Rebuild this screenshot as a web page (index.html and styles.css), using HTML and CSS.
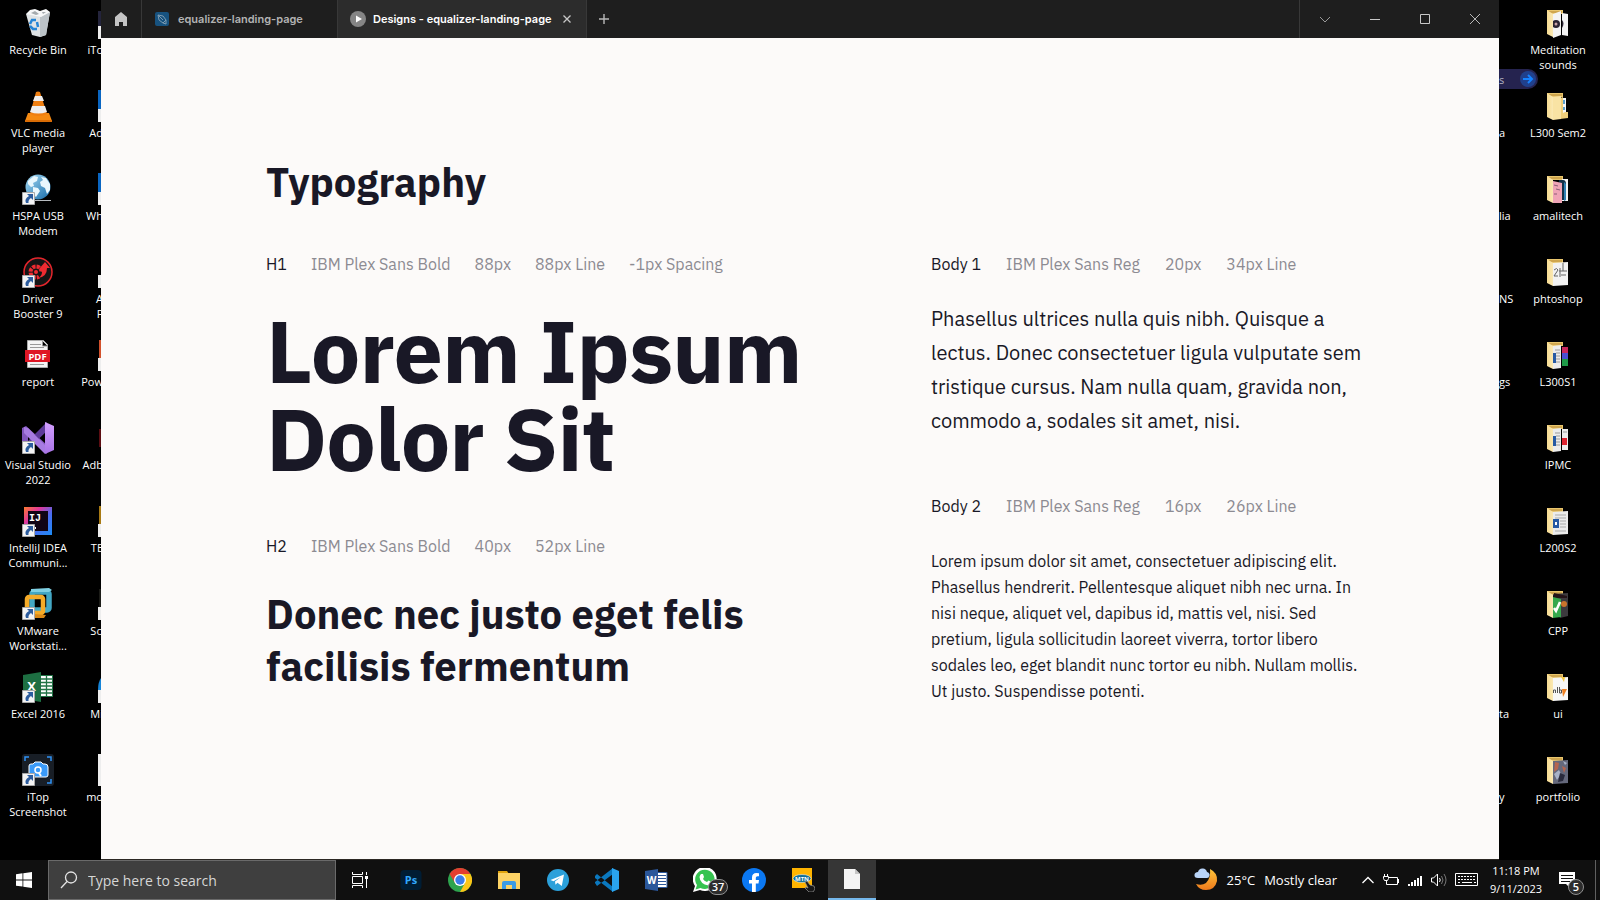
FILE: index.html
```html
<!DOCTYPE html>
<html lang="en">
<head>
<meta charset="utf-8">
<title>Designs - equalizer-landing-page</title>
<link rel="stylesheet" href="styles.css">
</head>
<body>
<svg class="defs" aria-hidden="true">
  <defs>
    <linearGradient id="fold" x1="0" x2="1"><stop offset="0" stop-color="#f7dc92"/><stop offset="1" stop-color="#fbe9b4"/></linearGradient>
    <linearGradient id="globe" x1="0" y1="0" x2="1" y2="1"><stop offset="0" stop-color="#a8dcf5"/><stop offset="1" stop-color="#146aa8"/></linearGradient>
    <linearGradient id="ij" x1="0" y1="0" x2="1" y2="1"><stop offset="0" stop-color="#ff7a2d"/><stop offset=".3" stop-color="#e0379b"/><stop offset=".6" stop-color="#4a6cf0"/><stop offset="1" stop-color="#1c8cf5"/></linearGradient>
    <linearGradient id="moon" x1="0" y1="0" x2="0" y2="1"><stop offset="0" stop-color="#ffc53a"/><stop offset="1" stop-color="#ee7a1c"/></linearGradient>
    <linearGradient id="vs" x1="0" y1="0" x2="0" y2="1"><stop offset="0" stop-color="#d3a0ff"/><stop offset="1" stop-color="#a873e6"/></linearGradient>
    <symbol id="link" viewBox="0 0 13 13"><path fill="#f4f4f4" stroke="#a8a8a8" d="M.5.5h12v12H.5z"/><path fill="#2c5c9e" d="M5 2h6v6L9 6Q6 8 6.500 11H4Q2 7 7 4Z"/></symbol>
    <symbol id="folder" viewBox="0 0 32 32"><path fill="#e9c66e" d="M5 3h16v4H5z"/><path fill="#cfa64e" d="M6 4h14v2H6z"/></symbol>
    <symbol id="flap" viewBox="0 0 32 32"><path fill="url(#fold)" d="M5 3l6 4v23l-6-3z"/></symbol>
  </defs>
</svg>
<div class="desktop">
  <ul class="icons">
    <li><svg viewBox="0 0 32 32"><path fill="#dfe3e5" d="M4 7l24-2-4 23-6 2-8-2z"/><path fill="#bcc3c8" d="M18 10l10-5-4 23-6 2z"/><path fill="#f6f7f8" d="M4 7l4-4 5-1 5 2 6-2 4 3-9 5z"/><path fill="#a4aaae" d="M9 6l4-2 4 3-3 1zM20 5l4 0-3 2z"/><path fill="none" stroke="#2585d6" stroke-width="2.500" d="M8 17l2-4h4M15 15l1 5M8 19l3 3h4"/></svg><span>Recycle Bin</span></li>
    <li><svg viewBox="0 0 32 32"><path fill="#f58a12" d="M6 23h21l3 8H3z"/><path fill="#d96c05" d="M3 30h27v2H3z"/><path fill="#ef7f12" d="M14 2q2-1 4 0l7 22q-9 4-17 0z"/><path fill="#eee" d="M13 6h7l2 5H11zM10 16h13l2 6q-9 3-17 0z"/></svg><span>VLC media<br>player</span></li>
    <li><svg viewBox="0 0 32 32"><path fill="#b8bcc0" d="M12 27h17v1H12z"/><circle cx="16" cy="14" r="12.500" fill="url(#globe)"/><path fill="#e9f7fd" d="M6 8l6-5 4 1-1 4-4 2 1 3-3 1-3-3zM11 14l5 1 2 3-4 6-3-3zM19 4l5 1 4 6 0 6-3 4-2-6-4-2-1-4 3-2z"/><use href="#link" x="0" y="19" width="13" height="13"/></svg><span>HSPA USB<br>Modem</span></li>
    <li><svg viewBox="0 0 32 32"><circle cx="16" cy="16" r="14" fill="#151515" stroke="#e3262c" stroke-width="1.500"/><circle cx="14" cy="16" r="5.500" fill="none" stroke="#ee2b31" stroke-width="4" stroke-dasharray="3.300 1"/><path fill="#151515" d="M14 16l12-1-5 12z"/><path fill="#ee2b31" d="M20 16l-3-3 6-7 5 6h-3q0 9-9 10 4-2 4-6z"/><circle cx="14" cy="16" r="2" fill="#ee2b31"/><use href="#link" y="19" width="13" height="13"/></svg><span>Driver<br>Booster 9</span></li>
    <li><svg viewBox="0 0 32 32"><path fill="#f4f4f4" stroke="#aaa" d="M5.500 1.500h16l4 4v23h-20z"/><path stroke="#999" d="M8 5.500h11M8 8.500h14M8 25.500h14M20.500 2v5h5"/><path fill="#df1624" d="M3 11h25v12H3z"/><text x="15.500" y="21" text-anchor="middle" class="glyph" font-size="9.500">PDF</text></svg><span>report</span></li>
    <li><svg viewBox="0 0 32 32"><path fill="#8256bd" d="M0 6l4-2 21 19v9L6 13v14l-6-2z"/><path fill="#5d3a99" d="M25 0v9L6 27l-4-2 0-2z"/><path fill="url(#vs)" d="M23 0l9 4v24l-9 4z"/><path fill="#a77be2" d="M2 5l4 1 17 17v9L2 11z"/><use href="#link" y="19" width="13" height="13"/></svg><span>Visual Studio<br>2022</span></li>
    <li><svg viewBox="0 0 32 32"><path fill="url(#ij)" d="M2 2h28v28H2z"/><path fill="#100414" d="M6 6h20v20H6z"/><text x="7" y="16" class="glyph glyph-mono" font-size="10">IJ</text><path fill="#fff" d="M8 22h6v2H8z"/><use href="#link" y="19" width="13" height="13"/></svg><span>IntelliJ IDEA<br>Communi...</span></li>
    <li><svg viewBox="0 0 32 32"><rect x="10" y="4" width="17" height="18" rx="2" fill="none" stroke="#43a7c4" stroke-width="5.500"/><path fill="#7fd0e3" d="M9 1l18-1 3 2-3 2H9z"/><rect x="5" y="9" width="16" height="16" rx="2" fill="none" stroke="#f5ab28" stroke-width="4.500"/><path fill="#da8815" d="M12 26l12 1-2 3H12z"/><use href="#link" y="19" width="13" height="13"/></svg><span>VMware<br>Workstati...</span></li>
    <li><svg viewBox="0 0 32 32"><path fill="#fff" stroke="#217346" d="M17 4.500h13.500v21H17z"/><path stroke="#217346" stroke-width="1.300" d="M18 8h12M18 11.500h12M18 15h12M18 18.500h12M18 22h12M24.500 5v20"/><path fill="#1d6f42" d="M1 4l18-3v30L1 28z"/><text x="9.500" y="20" text-anchor="middle" class="glyph" font-size="13">X</text><use href="#link" y="19" width="13" height="13"/></svg><span>Excel 2016</span></li>
    <li><svg viewBox="0 0 32 32"><rect width="32" height="32" rx="3" fill="#181e26"/><path fill="none" stroke="#2f93f5" stroke-width="1.500" d="M3 7V3h4M25 3h4v4M29 25v4h-4"/><path fill="#3a9af8" stroke="#fff" d="M7 12q0-2 2-2h2l2-2h6l2 2h2q3 0 3 3v8q0 2-2 2H9q-2 0-2-2z"/><circle cx="16" cy="16" r="3" fill="#3a9af8" stroke="#fff" stroke-width="1.500"/><path stroke="#fff" stroke-width="2" d="M17 19l2 3"/><use href="#link" y="19" width="13" height="13"/></svg><span>iTop<br>Screenshot</span></li>
  </ul>
  <ul class="icons icons-cut-left">
    <li><svg viewBox="0 0 3 32"><path fill="#24243c" d="M0 4h3v15H0z"/><path fill="#eee" d="M0 19h3v13H0z"/></svg><span>iTo</span></li>
    <li><svg viewBox="0 0 3 32"><path fill="#0a66c2" d="M0 0h3v19H0z"/><path fill="#eee" d="M0 19h3v13H0z"/></svg><span>Ad</span></li>
    <li><svg viewBox="0 0 3 32"><path fill="#0a66c2" d="M0 0h3v19H0z"/><path fill="#eee" d="M0 19h3v13H0z"/></svg><span>Wh</span></li>
    <li><svg viewBox="0 0 3 32"><path fill="#eee" d="M0 19h3v13H0z"/></svg><span>A<br>F</span></li>
    <li><svg viewBox="0 0 3 32"><path fill="#d2512c" d="M1 1h2v18H1z"/><path fill="#eee" d="M0 19h3v13H0z"/></svg><span>Pow</span></li>
    <li><svg viewBox="0 0 3 32"><path fill="#5c0d12" d="M1 7h2v18H1z"/></svg><span>Adb</span></li>
    <li><svg viewBox="0 0 3 32"><path fill="#a87a14" d="M1 1h2v18H1z"/><path fill="#eee" d="M0 19h3v13H0z"/></svg><span>TE</span></li>
    <li><svg viewBox="0 0 3 32"><path fill="#1c1c18" d="M1 1h2v18H1z"/><path fill="#eee" d="M0 19h3v13H0z"/></svg><span>So</span></li>
    <li><svg viewBox="0 0 3 32"><path fill="#1785d8" d="M3 7v12H0q0-8 3-12z"/><path fill="#eee" d="M0 19h3v13H0z"/></svg><span>Mi</span></li>
    <li><svg viewBox="0 0 3 32"><path fill="#eee" d="M0 0h3v32H0z"/></svg><span>mo</span></li>
  </ul>

  <div class="window">
    <header class="titlebar">
      <button class="home" aria-label="Home"><svg width="14" height="16" viewBox="0 0 14 16"><path fill="#c4c4c4" d="M7 1l6 5v9H9v-4H5v4H1V6z"/></svg></button>
      <div class="tab">
        <svg width="14" height="14" viewBox="0 0 14 14"><rect width="14" height="14" rx="2" fill="#17527f"/><path fill="none" stroke="#7c9ab0" d="M3 3l5 1 3 4-3 3-4-3zM3 3l5 5M8 11l3 1 0-4"/></svg>
        <span>equalizer-landing-page</span>
      </div>
      <div class="tab tab-active">
        <svg width="16" height="16" viewBox="0 0 16 16"><circle cx="8" cy="8" r="8" fill="#858585"/><path fill="#fff" d="M6 4.500l6 3.500-6 3.500z"/></svg>
        <span>Designs - equalizer-landing-page</span>
        <button aria-label="Close tab"><svg width="10" height="10" viewBox="0 0 10 10"><path stroke="#c8c8c8" stroke-width="1.300" d="M1.500 1.500l7 7M8.500 1.500l-7 7"/></svg></button>
      </div>
      <button class="new-tab" aria-label="New tab"><svg width="12" height="12" viewBox="0 0 12 12"><path stroke="#b8b8b8" stroke-width="1.400" d="M6 1v10M1 6h10"/></svg></button>
      <div class="controls">
        <button aria-label="Tabs"><svg width="12" height="12" viewBox="0 0 12 12"><path fill="none" stroke="#999" d="M1 4l5 5 5-5"/></svg></button>
        <button aria-label="Minimize"><svg width="12" height="12" viewBox="0 0 12 12"><path stroke="#c8c8c8" d="M1 6.500h10"/></svg></button>
        <button aria-label="Maximize"><svg width="12" height="12" viewBox="0 0 12 12"><path fill="none" stroke="#c8c8c8" d="M1.500 1.500h9v9h-9z"/></svg></button>
        <button aria-label="Close"><svg width="12" height="12" viewBox="0 0 12 12"><path stroke="#b8b8b8" d="M1 1l10 10M11 1L1 11"/></svg></button>
      </div>
    </header>
    <main class="page">
      <h2 class="title">Typography</h2>
      <div class="columns">
        <div class="headings">
          <p class="meta"><b>H1</b><span>IBM Plex Sans Bold</span><span>88px</span><span>88px Line</span><span>-1px Spacing</span></p>
          <h1 class="h1">Lorem Ipsum<br>Dolor Sit</h1>
          <p class="meta"><b>H2</b><span>IBM Plex Sans Bold</span><span>40px</span><span>52px Line</span></p>
          <h2 class="h2">Donec nec justo eget felis<br>facilisis fermentum</h2>
        </div>
        <div>
          <p class="meta"><b>Body 1</b><span>IBM Plex Sans Reg</span><span>20px</span><span>34px Line</span></p>
          <p class="body1">Phasellus ultrices nulla quis nibh. Quisque a<br>lectus. Donec consectetuer ligula vulputate sem<br>tristique cursus. Nam nulla quam, gravida non,<br>commodo a, sodales sit amet, nisi.</p>
          <p class="meta"><b>Body 2</b><span>IBM Plex Sans Reg</span><span>16px</span><span>26px Line</span></p>
          <p class="body2">Lorem ipsum dolor sit amet, consectetuer adipiscing elit.<br>Phasellus hendrerit. Pellentesque aliquet nibh nec urna. In<br>nisi neque, aliquet vel, dapibus id, mattis vel, nisi. Sed<br>pretium, ligula sollicitudin laoreet viverra, tortor libero<br>sodales leo, eget blandit nunc tortor eu nibh. Nullam mollis.<br>Ut justo. Suspendisse potenti.</p>
        </div>
      </div>
    </main>
  </div>

  <ul class="icons icons-cut-right">
    <li></li>
    <li><span>a</span></li>
    <li><span>lia</span></li>
    <li><span>NS</span></li>
    <li><span>gs</span></li>
    <li></li>
    <li></li>
    <li></li>
    <li><span>ta</span></li>
    <li><span>y</span></li>
  </ul>
  <ul class="icons icons-last">
    <li><svg viewBox="0 0 32 32"><use href="#folder"/><path fill="#f4f4f4" d="M11 7l8-3v24l-8 3zM20 6l6 1v22l-6-1z"/><circle cx="14" cy="17" r="4" fill="#2b2433"/><circle cx="14" cy="17" r="1.500" fill="#c9a3a8"/><path fill="#2b2433" d="M20 13q3 3 0 8z"/><use href="#flap"/></svg><span>Meditation<br>sounds</span></li>
    <li><svg viewBox="0 0 32 32"><use href="#folder"/><path fill="#f3f7fa" d="M18 8h6v16h-6z"/><path fill="#5a9fd0" d="M20 10h3v4h-3zM20 17h3v3h-3z"/><path fill="#efcf7b" d="M23 22h3v6l-8 1V8l3-1v16z"/><path fill="#f9e3a4" d="M11 7l8-1v23l-8 1z"/><use href="#flap"/></svg><span>L300 Sem2</span></li>
    <li><svg viewBox="0 0 32 32"><use href="#folder"/><path fill="#f4f4f4" d="M20 6h6v22h-6z"/><path fill="#123048" d="M17 7h4q3 0 3 4v16h-7z"/><path fill="#2f81b5" d="M22 9l2 2v16l-2 1z"/><path fill="#efa4b6" d="M11 8l9 2v20l-9 0z"/><path stroke="#8b5c76" d="M12 12l4 1M14 16l4 1M12 21h3"/><use href="#flap"/></svg><span>amalitech</span></li>
    <li><svg viewBox="0 0 32 32"><use href="#folder"/><path fill="#f2f2f2" d="M11 7l15-1v23l-15 1z"/><path fill="none" stroke="#666" d="M12 14q3-3 4 0l-4 6h4M18 12v9M17 15h8M19 19h5M21 7v8"/><use href="#flap"/></svg><span>phtoshop</span></li>
    <li><svg viewBox="0 0 32 32"><use href="#folder"/><path fill="#ececec" d="M11 7l8-1v23l-8 1z"/><path fill="#c8285d" d="M20 8h6v6h-6z"/><path fill="#4a4fd2" d="M20 14h6v6h-6z"/><path fill="#1e9a48" d="M20 20h6v7h-6z"/><path stroke="#999" d="M13 11h5M14 14h4M14 17h4M14 20h4M14 23h4"/><path fill="#275aa4" d="M11 14h3v10h-3z"/><use href="#flap"/></svg><span>L300S1</span></li>
    <li><svg viewBox="0 0 32 32"><use href="#folder"/><path fill="#ececec" d="M11 7l8-1v23l-8 1zM20 7h6v21h-6z"/><path stroke="#999" d="M13 11h5M14 14h4M14 17h4M14 20h4M14 23h4M21 10h4"/><path fill="#275aa4" d="M11 14h3v10h-3z"/><path fill="#dc2430" d="M20 16h5v7h-5z"/><use href="#flap"/></svg><span>IPMC</span></li>
    <li><svg viewBox="0 0 32 32"><use href="#folder"/><path fill="#ececec" d="M11 7l15-1v23l-15 1z"/><path stroke="#aaa" d="M13 10h11M13 13h11M18 16h6M18 19h6M18 22h6M13 26h11"/><path fill="#275aa4" d="M11 14h6v9h-6z"/><path fill="#fff" d="M13 17h2v3h-2z"/><use href="#flap"/></svg><span>L200S2</span></li>
    <li><svg viewBox="0 0 32 32"><use href="#folder"/><path fill="#3c3a3e" d="M11 6l15-1v23l-8 2z"/><path fill="#241418" d="M12 5l13 3v2H12z"/><circle cx="22" cy="16" r="3" fill="#c9742c"/><path fill="#36a84c" d="M11 9l8 2v18l-8 1z"/><path fill="none" stroke="#fff" stroke-width="2.500" d="M12 20l2 3 4-9"/><use href="#flap"/></svg><span>CPP</span></li>
    <li><svg viewBox="0 0 32 32"><use href="#folder"/><path fill="#f7f7f7" d="M11 7l15-1v23l-15 1z"/><path fill="#f5c842" d="M19 6h4l-1 5z"/><path fill="#ef8224" d="M20 18h5l-4 8z"/><path fill="none" stroke="#555" d="M11.500 22v-3h2v3M15.500 16v6M17.500 16v6h2v-3h-2"/><use href="#flap"/></svg><span>ui</span></li>
    <li><svg viewBox="0 0 32 32"><use href="#folder"/><path fill="#65697c" d="M11 7l15-1v23l-15 1z"/><path fill="#b7654e" d="M13 8l4 1-1 6-4 3zM20 12l4 2-2 5z"/><path fill="#a8b2c8" d="M12 20l5-4 2 4-4 6zM21 7l4 2-2 2z"/><path fill="#292a3c" d="M18 19l5 2-2 6-5 1z"/><use href="#flap"/></svg><span>portfolio</span></li>
  </ul>
  <div class="pill"><span>s</span><svg width="16" height="16" viewBox="0 0 16 16"><circle cx="8" cy="8" r="8" fill="#20408c"/><path fill="none" stroke="#1683ff" stroke-width="2" d="M3 8h9M8 4l4 4-4 4"/></svg></div>
</div>

<footer class="taskbar">
  <button class="start" aria-label="Start"><svg width="16" height="16" viewBox="0 0 16 16"><path fill="#fff" d="M0 2.200l6.500-.9v6.200H0zM7.300 1.200L16 0v7.500H7.300zM0 8.400h6.500v6.200L0 13.800zM7.300 8.400H16V16l-8.700-1.200z"/></svg></button>
  <label class="search"><svg width="18" height="18" viewBox="0 0 18 18"><circle cx="11" cy="6.500" r="5.500" fill="none" stroke="#e4e4e4" stroke-width="1.300"/><path stroke="#e4e4e4" stroke-width="1.300" d="M7 10.500L1 17"/></svg><input type="text" placeholder="Type here to search" aria-label="Search"></label>
  <nav class="apps">
    <button class="taskview" aria-label="Task view"><svg width="18" height="16" viewBox="0 0 18 16"><path fill="none" stroke="#fff" d="M1.500 0v2.500h10V0M1.500 16v-2.500h10V16M1.500 4.500h10v7h-10zM15.500 0v3M15.500 7v9"/><path fill="#fff" d="M14 4h3v3h-3z"/></svg></button>
    <button aria-label="Photoshop"><svg width="24" height="24" viewBox="0 0 24 24"><rect x="1.500" y="2" width="21" height="20" rx="4" fill="#001d34"/><text x="12" y="16" text-anchor="middle" class="glyph glyph-ps" font-size="11">Ps</text></svg></button>
    <button aria-label="Chrome"><svg width="24" height="24" viewBox="0 0 24 24"><circle cx="12" cy="12" r="12" fill="#2da34d"/><path fill="#e33e30" d="M1.600 6A12 12 0 0 1 22.400 6H12L7 15z"/><path fill="#fbc517" d="M22.400 6A12 12 0 0 1 12 24l5-9-5-9z"/><circle cx="12" cy="12" r="6" fill="#fff"/><circle cx="12" cy="12" r="4.700" fill="#3b7de8"/></svg></button>
    <button aria-label="File Explorer"><svg width="24" height="24" viewBox="0 0 24 24"><path fill="#e2a50e" d="M1 3h9l2 3H1z"/><path fill="#fdd365" d="M1 5h22v16H1z"/><path fill="#3b9be4" d="M5 21v-6q0-2 2-2h10q2 0 2 2v6h-4v-4H9v4z"/></svg></button>
    <button aria-label="Telegram"><svg width="24" height="24" viewBox="0 0 24 24"><circle cx="12" cy="12" r="11" fill="#2ba0da"/><path fill="#fff" d="M4.500 12L18 6.500 15.800 18l-4.300-3.200-2 2L9 13.500l6-4.500-7.500 4.200z"/></svg></button>
    <button aria-label="Visual Studio Code"><svg width="24" height="24" viewBox="0 0 24 24"><path fill="#0b78be" d="M0 8l2-2 16 13v5L0 10zM0 15l2 3L18 6V0L0 14z"/><path fill="#2aa4ee" d="M17 0l7 3v18l-7 3z"/></svg></button>
    <button aria-label="Word"><svg width="24" height="24" viewBox="0 0 24 24"><path fill="#fff" stroke="#2b579a" d="M13 4.500h10v15H13z"/><path stroke="#2b579a" d="M14 7.500h8M14 10.500h8M14 13.500h8M14 16.500h8"/><path fill="#2b579a" d="M1 3l13-2v22L1 21z"/><text x="7.500" y="16" text-anchor="middle" class="glyph" font-size="10">W</text></svg></button>
    <button aria-label="WhatsApp"><svg width="24" height="24" viewBox="0 0 24 24"><path fill="#fff" d="M0 24l2-6A12 12 0 1 1 7 22z"/><path fill="#36c350" d="M2.500 21.500L4 17a9.700 9.700 0 1 1 3.500 3z"/><path fill="#fff" d="M8 6l2 0 1 3-1 2q1 2 4 3l1.500-1.500 3 1.500q0 3-3 3.500Q7 16 6.500 9 7 7 8 6z"/></svg><span class="badge">37</span></button>
    <button aria-label="Facebook"><svg width="24" height="24" viewBox="0 0 24 24"><circle cx="12" cy="12" r="12" fill="#0b78f2"/><path fill="#fff" d="M10 24v-8.500H7V12h3V9.500Q10 5 14.500 5l2.500.2v3h-1.500q-1.700 0-1.700 1.600V12H17l-.5 3.500h-2.700V24z"/></svg></button>
    <button aria-label="MTN"><svg width="24" height="24" viewBox="0 0 24 24"><path fill="#ffb400" d="M1 0h20v20H1z"/><ellipse cx="11" cy="10.500" rx="9" ry="4" fill="#116e99" stroke="#fff" stroke-width=".5"/><text x="11" y="13" text-anchor="middle" class="glyph" font-size="6">MTN</text><path fill="#181818" stroke="#999" stroke-width=".7" d="M14 14l2-1 3 4 4 1 1 3-2 3h-4l-4-4 1-1 2 1z"/></svg></button>
    <button class="open" aria-label="Document"><svg width="24" height="24" viewBox="0 0 24 24"><path fill="#f4f4f4" d="M4 2h11l5 5v15H4z"/><path fill="#c6c6c6" d="M15 2v5h5z"/></svg></button>
  </nav>
  <div class="tray">
    <button class="weather"><svg width="24" height="24" viewBox="0 0 24 24"><path fill="url(#moon)" d="M16 1q8 4 7 12-2 9-11 9-7 0-10-6 6 2 10-1 5-5 4-14z"/><path fill="#b9d4f8" d="M4 10Q0 10 .5 6.500 1 4 4 4q1-4 5-3.500 3 0 4 3.500 3 1 2.500 3.500T13 10z"/></svg><span>25°C</span><span>Mostly clear</span></button>
    <button aria-label="Show hidden icons"><svg width="14" height="14" viewBox="0 0 14 14"><path fill="none" stroke="#fff" stroke-width="1.300" d="M1.500 10L7 4.500 12.500 10"/></svg></button>
    <svg width="18" height="14" viewBox="0 0 18 14"><path fill="none" stroke="#fff" d="M7 4.500h8.500v7h-11V8M16.500 6v4M1.500 3.500h5v2l-1 2h-3l-1-2zM2.500 1v2M5.500 1v2"/></svg>
    <svg width="16" height="14" viewBox="0 0 16 14"><path fill="#fff" d="M1 11h2v2H1zM4 9h2v4H4zM7 7h2v6H7zM10 5h2v8h-2zM13 3h2v10h-2z"/></svg>
    <svg width="18" height="14" viewBox="0 0 18 14"><path fill="none" stroke="#fff" d="M1.500 5h2l4-4v12l-4-4h-2zM9.500 5q1.500 2 0 4"/><path fill="none" stroke="#777" d="M11.500 3q3 4 0 8M14 1q4 6 0 12"/></svg>
    <svg width="24" height="14" viewBox="0 0 24 14"><path fill="none" stroke="#fff" d="M.5.5h22v12H.5z"/><path stroke="#fff" stroke-dasharray="2 1" d="M3 3.500h18M3 6.500h18"/><path stroke="#fff" d="M3 9.500h2M7 9.500h10M19 9.500h2"/></svg>
    <button class="clock"><span>11:18 PM</span><span>9/11/2023</span></button>
    <button class="notes" aria-label="Notifications"><svg width="16" height="16" viewBox="0 0 16 16"><path fill="#fff" d="M0 0h16v12h-5v4l-4-4H0z"/><path stroke="#111" d="M2 3.500h12M2 6.500h12M2 9.500h9"/></svg><span class="badge badge-round">5</span></button>
  </div>
</footer>
</body>
</html>
```
FILE: styles.css
```css
* { box-sizing: border-box; }

body {
  margin: 0;
  min-height: 100vh;
  display: flex;
  flex-direction: column;
  background: #000;
  font-family: "Open Sans", "Noto Sans", sans-serif;
  color: #fff;
}

button {
  border: 0;
  padding: 0;
  background: none;
  color: inherit;
  font: inherit;
  display: flex;
  align-items: center;
  justify-content: center;
}

svg { display: block; flex: none; }
p, h1, h2, ul { margin: 0; padding: 0; }

.defs { position: absolute; width: 0; height: 0; }
.glyph { font-family: "Open Sans", sans-serif; font-weight: 700; fill: #fff; }
.glyph-mono { font-family: "Liberation Mono", monospace; }
.glyph-ps { fill: #31a8ff; }

/* Desktop */
.desktop { position: relative; flex: 1; display: flex; }

.icons {
  list-style: none;
  width: 76px;
  flex: none;
  font-size: 11px;
  line-height: 15px;
  text-align: center;
  white-space: nowrap;
}
.icons li {
  height: 83px;
  padding-top: 7px;
  display: flex;
  flex-direction: column;
  align-items: center;
  gap: 3px;
}
.icons svg { width: 32px; height: 32px; }
.icons-last { margin-right: 4px; }
.icons + .icons-cut-left { width: 25px; overflow: hidden; }
.icons-cut-left li { align-items: flex-end; }
.icons-cut-left svg { width: 3px; }
.icons-cut-left span { margin-right: -2px; }
.icons-cut-right { width: 20px; margin-right: 1px; }
.icons-cut-right li { align-items: flex-start; padding-top: 42px; }

.pill {
  position: absolute;
  top: 69px;
  right: 62px;
  width: 39px;
  height: 20px;
  padding-right: 2px;
  display: flex;
  align-items: center;
  justify-content: space-between;
  border-radius: 0 10px 10px 0;
  background: #25234f;
  color: #b4b4c4;
  font-size: 11px;
}

/* Application window */
.window {
  flex: 1;
  display: flex;
  flex-direction: column;
  background: #fcfaf9;
  border-bottom: 1px solid #2b2723;
}
.titlebar {
  height: 38px;
  display: flex;
  background: #1e1e1e;
  font-family: Inter, sans-serif;
  font-size: 11px;
  font-weight: 600;
}
.home { width: 41px; border-right: 1px solid #383838; }
.tab {
  width: 196px;
  padding: 0 13px;
  display: flex;
  align-items: center;
  gap: 9px;
  color: #b3b3b3;
  border-right: 1px solid #383838;
  white-space: nowrap;
}
.tab-active { width: 249px; gap: 7px; padding: 0 12px; background: #2c2c2c; color: #fff; }
.tab-active button { margin-left: 3px; }
.new-tab { width: 34px; }
.controls { margin-left: auto; display: flex; border-left: 1px solid #383838; }
.controls button { width: 50px; }
.controls button:last-child { width: 49px; }

.page {
  flex: 1;
  padding: 118px 0 0 165px;
  color: #191826;
  font-family: "IBM Plex Sans", Roboto, sans-serif;
  white-space: nowrap;
}
.title, .h2 { font-size: 40px; line-height: 52px; font-weight: 700; }
.title { margin-bottom: 44px; }
.columns { display: grid; grid-template-columns: 665fr 568fr; }
.meta { display: flex; gap: 25px; font-size: 16px; line-height: 24px; color: #8c8b92; }
.headings .meta { gap: 24px; }
.meta b { font-weight: 400; color: #191826; }
.h1 { margin: 30px 0 52px; font-size: 88px; line-height: 88px; font-weight: 700; letter-spacing: -1px; }
.h2 { margin-top: 30px; }
.body1 { margin: 26px 0 56px; font-size: 20px; line-height: 34px; }
.body2 { margin-top: 30px; font-size: 16px; line-height: 26px; }

/* Taskbar */
.taskbar { height: 40px; display: flex; background: #101010; }
.start { width: 48px; }
.search {
  width: 288px;
  padding: 0 11px;
  display: flex;
  align-items: center;
  gap: 10px;
  background: #3f3f3f;
  border: 1px solid #6a6a6a;
}
.search input {
  flex: 1;
  min-width: 0;
  border: 0;
  padding: 0;
  outline: 0;
  background: none;
  color: #fff;
  font: 14px "Open Sans", sans-serif;
}
.search input::placeholder { color: #d6d6d6; opacity: 1; }
.apps { display: flex; gap: 1px; }
.apps button { position: relative; width: 48px; }
.apps .taskview { margin-right: 2px; }
.apps .open { background: #363636; border-bottom: 2px solid #76b9ed; }
.badge {
  position: absolute;
  right: 1px;
  bottom: 5px;
  width: 20px;
  height: 16px;
  border: 1px solid #909090;
  border-radius: 8px;
  background: #2c2c2c;
  font-size: 11px;
  line-height: 14px;
  font-weight: 600;
  text-align: center;
}
.tray { margin-left: auto; padding-right: 4px; display: flex; align-items: center; gap: 7px; }
.weather { gap: 9px; margin-right: 17px; font-size: 13px; white-space: nowrap; }
.clock { width: 60px; flex-direction: column; font-size: 11px; line-height: 18px; }
.notes { position: relative; width: 43px; height: 40px; padding-right: 14px; border-right: 1px solid #606060; }
.badge-round { width: 16px; right: 11px; }
```
